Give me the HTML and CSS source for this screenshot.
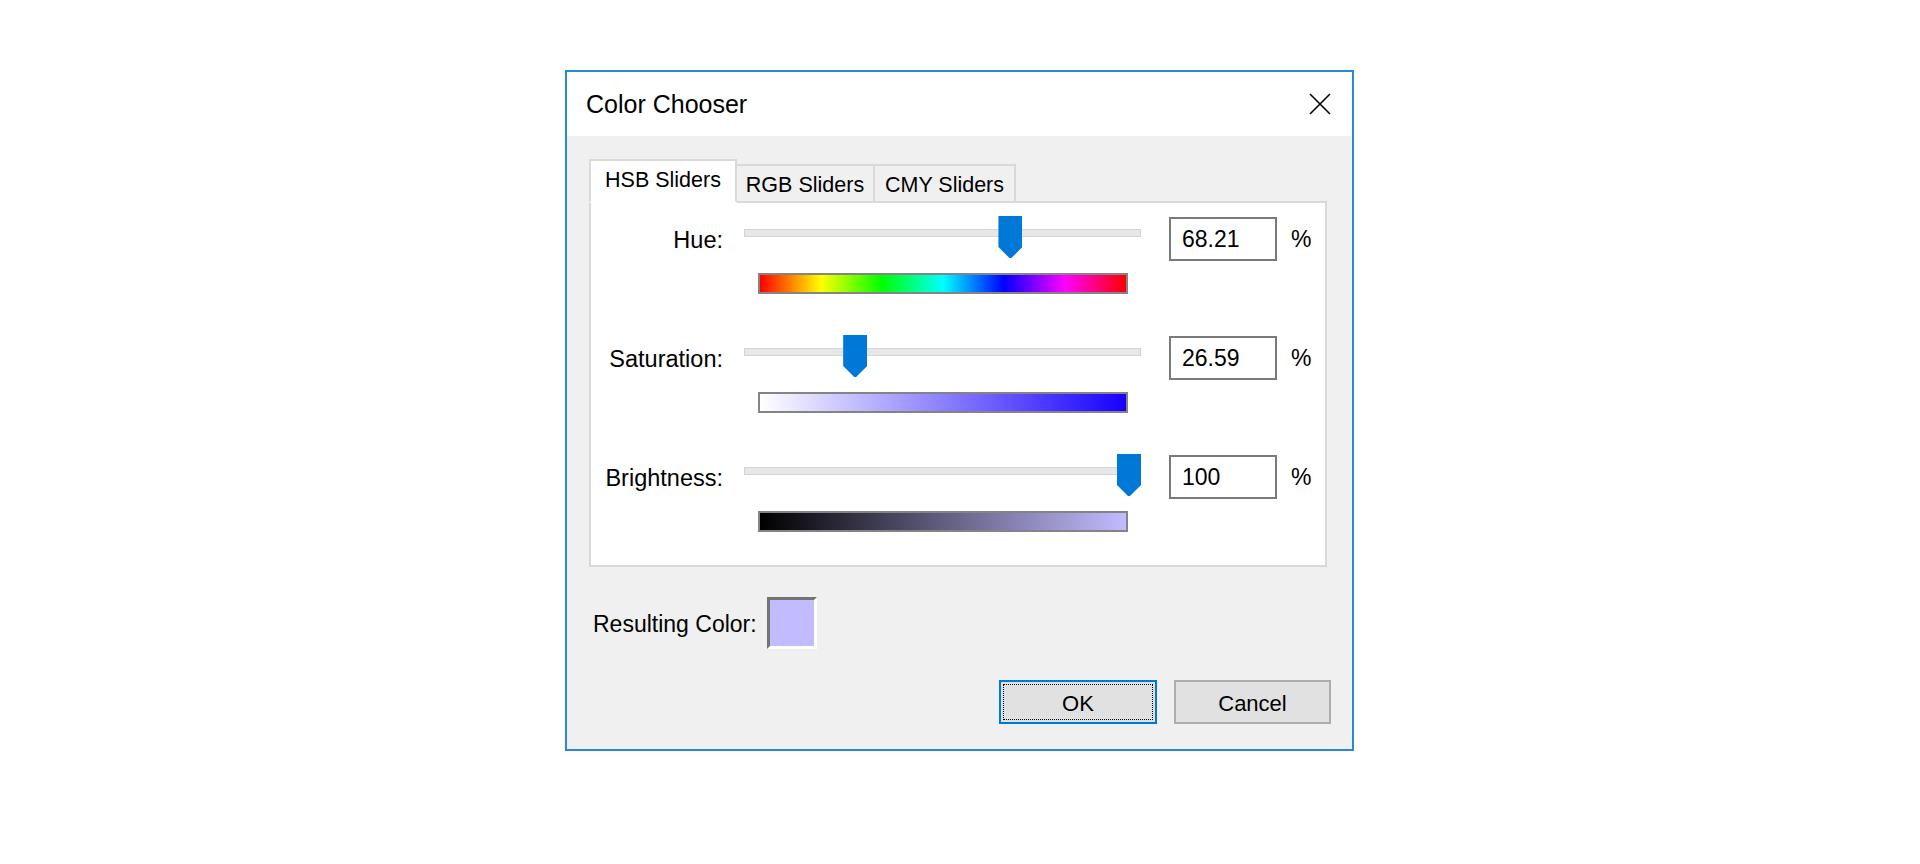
FILE: index.html
```html
<!DOCTYPE html>
<html lang="en">
<head>
    <meta charset="UTF-8">
    <meta name="viewport" content="width=device-width, initial-scale=1.0">
    <title>Color Chooser</title>
    <link rel="stylesheet" href="styles.css">
</head>
<body>
    <div class="dialog">
        <div class="titlebar">
            <span class="title">Color Chooser</span>
            <button class="close-btn" aria-label="Close">
                <svg width="22" height="22" viewBox="0 0 22 22">
                    <path d="M1 1 L21 21 M21 1 L1 21" stroke="#000" stroke-width="1.6" fill="none"/>
                </svg>
            </button>
        </div>

        <div class="dialog-body">
            <div class="tabs">
                <div class="tab tab-active tab-hsb">HSB Sliders</div>
                <div class="tab tab-rgb">RGB Sliders</div>
                <div class="tab tab-cmy">CMY Sliders</div>
            </div>

            <div class="panel">
                <div class="slider-row">
                    <div class="row-main">
                        <div class="row-label">Hue:</div>
                        <div class="slider">
                            <div class="track"></div>
                            <div class="travel">
                                <div class="thumb" style="left: 68.21%"></div>
                            </div>
                        </div>
                        <input class="value-box" type="text" value="68.21">
                        <span class="unit">%</span>
                    </div>
                    <div class="bar bar-hue"></div>
                </div>

                <div class="slider-row">
                    <div class="row-main">
                        <div class="row-label">Saturation:</div>
                        <div class="slider">
                            <div class="track"></div>
                            <div class="travel">
                                <div class="thumb" style="left: 26.59%"></div>
                            </div>
                        </div>
                        <input class="value-box" type="text" value="26.59">
                        <span class="unit">%</span>
                    </div>
                    <div class="bar bar-sat"></div>
                </div>

                <div class="slider-row">
                    <div class="row-main">
                        <div class="row-label">Brightness:</div>
                        <div class="slider">
                            <div class="track"></div>
                            <div class="travel">
                                <div class="thumb" style="left: 100%"></div>
                            </div>
                        </div>
                        <input class="value-box" type="text" value="100">
                        <span class="unit">%</span>
                    </div>
                    <div class="bar bar-bright"></div>
                </div>
            </div>

            <div class="result">
                <span class="result-label">Resulting Color:</span>
                <div class="swatch"></div>
            </div>

            <div class="buttons">
                <button class="btn btn-default">OK</button>
                <button class="btn">Cancel</button>
            </div>
        </div>
    </div>
</body>
</html>
```

FILE: styles.css
```css
body {
    margin: 0;
    background-color: #ffffff;
    font-family: "Liberation Sans", Arial, sans-serif;
    color: #000000;
}

.dialog {
    width: 789px;
    height: 681px;
    box-sizing: border-box;
    margin: 70px 0 0 565px;
    border: 2px solid #2a88d8;
    background-color: #f0f0f0;
    display: flex;
    flex-direction: column;
}

.titlebar {
    height: 64px;
    flex-shrink: 0;
    background-color: #ffffff;
    display: flex;
    align-items: center;
    justify-content: space-between;
    padding: 0 21px 0 19px;
}

.title {
    font-size: 25px;
}

.close-btn {
    width: 22px;
    height: 22px;
    padding: 0;
    border: none;
    background: none;
    display: flex;
}

.dialog-body {
    padding: 23px 25px 0 22px;
}

.tabs {
    display: flex;
    align-items: flex-end;
    margin-bottom: -2px;
    position: relative;
    z-index: 1;
}

.tab {
    height: 39px;
    box-sizing: border-box;
    border: 2px solid #d9d9d9;
    background-color: #f0f0f0;
    font-size: 21.5px;
    display: flex;
    align-items: center;
    justify-content: center;
    padding-top: 4px;
    margin-left: -2px;
}

.tab-hsb {
    width: 148px;
    margin-left: 0;
}

.tab-rgb {
    width: 140px;
}

.tab-cmy {
    width: 143px;
}

.tab-active {
    height: 44px;
    background-color: #ffffff;
    border-bottom-color: #ffffff;
    padding-top: 0;
    padding-bottom: 1px;
    position: relative;
    z-index: 2;
}

.panel {
    height: 366px;
    box-sizing: border-box;
    background-color: #ffffff;
    border: 2px solid #d9d9d9;
    padding-top: 14px;
}

.slider-row {
    margin-bottom: 42px;
}

.row-main {
    display: flex;
    align-items: center;
    height: 44px;
}

.row-label {
    width: 132px;
    text-align: right;
    font-size: 23.5px;
    margin-right: 21px;
    padding-top: 2px;
}

.slider {
    width: 397px;
    height: 44px;
    position: relative;
}

.track {
    position: absolute;
    left: 0;
    right: 0;
    top: 12px;
    height: 8px;
    box-sizing: border-box;
    background-color: #e7e7e7;
    border: 1px solid #d4d4d4;
}

.travel {
    position: absolute;
    left: 12px;
    right: 12px;
    top: 0;
    bottom: 0;
}

.thumb {
    position: absolute;
    top: -1px;
    width: 24px;
    height: 42px;
    transform: translateX(-50%);
    background-color: #0078d7;
    clip-path: polygon(0 0, 100% 0, 100% 74%, 54% 100%, 46% 100%, 0 74%);
}

.value-box {
    width: 108px;
    height: 44px;
    box-sizing: border-box;
    margin-left: 28px;
    border: 2px solid #7a7a7a;
    padding: 0 0 0 11px;
    font-family: inherit;
    font-size: 23px;
    color: #000000;
    background-color: #ffffff;
    outline: none;
}

.unit {
    margin-left: 14px;
    font-size: 23px;
}

.bar {
    width: 370px;
    height: 21px;
    box-sizing: border-box;
    margin: 12px 0 0 167px;
    border: 2px solid #848484;
}

.bar-hue {
    background: linear-gradient(to right, #ff0000, #ffff00, #00ff00, #00ffff, #0000ff, #ff00ff, #ff0000);
}

.bar-sat {
    background: linear-gradient(to right, #ffffff, #1800ff);
}

.bar-bright {
    background: linear-gradient(to right, #000000, #c2bbff);
}

.result {
    display: flex;
    align-items: center;
    margin-top: 30px;
    padding-left: 4px;
    height: 52px;
}

.result-label {
    font-size: 23px;
    margin-right: 10px;
    padding-top: 2px;
}

.swatch {
    width: 50px;
    height: 52px;
    box-sizing: border-box;
    background-color: #c2bbff;
    border: 3px solid;
    border-color: #737373 #ffffff #ffffff #737373;
}

.buttons {
    display: flex;
    justify-content: flex-end;
    gap: 17px;
    margin: 31px -4px 0 0;
}

.btn {
    width: 157px;
    height: 44px;
    box-sizing: border-box;
    border: 2px solid #adadad;
    background-color: #e1e1e1;
    font-family: inherit;
    font-size: 22px;
    color: #000000;
    padding: 3px 0 0;
}

.btn-default {
    width: 158px;
    border-color: #0078d7;
    outline: 1px dotted #000000;
    outline-offset: -5px;
}
```
